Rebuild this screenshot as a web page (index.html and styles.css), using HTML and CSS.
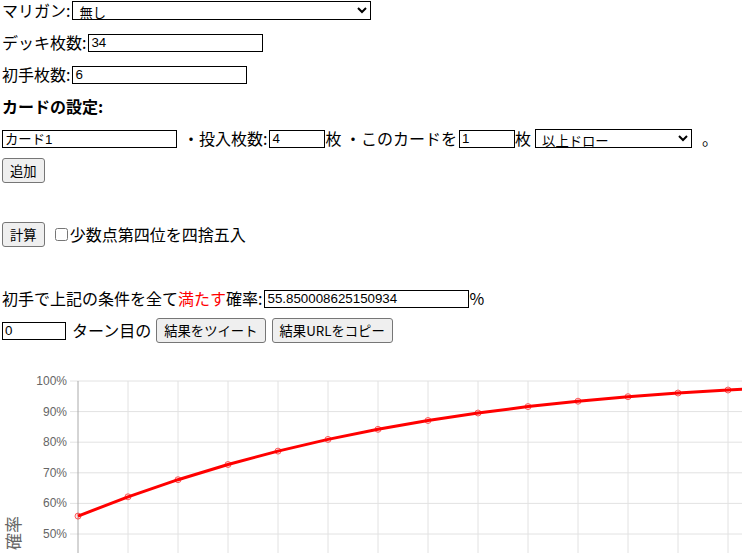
FILE: index.html
```html
<!DOCTYPE html>
<html>
	<head>
		<meta charset="utf-8">
		<title>初手確率計算</title>
		<link rel="stylesheet" href="styles.css">
	</head>
	<body>
		<div class="row">マリガン:<select class="sel sel-mulligan"><option>無し</option></select></div>
		<div class="row">デッキ枚数:<input class="txt w175" type="text" value="34"></div>
		<div class="row">初手枚数:<input class="txt w175" type="text" value="6"></div>
		<div class="row heading">カードの設定:</div>
		<div class="row"><input class="txt first w175" type="text" value="カード1"><span class="gap6">・投入枚数:</span><input class="txt w56" type="text" value="4"><span>枚 ・このカードを</span><input class="txt w56" type="text" value="1"><span>枚</span><select class="sel sel-draw"><option>以上ドロー</option></select><span class="gap10">。</span></div>
		<div class="row"><button class="btn">追加</button></div>
		<div class="row"></div>
		<div class="row"><button class="btn">計算</button><input class="chk" type="checkbox"><span>少数点第四位を四捨五入</span></div>
		<div class="row"></div>
		<div class="row">初手で上記の条件を全て<span class="red">満たす</span>確率:<input class="txt w205" type="text" value="55.850008625150934">%</div>
		<div class="row"><input class="txt first w64" type="text" value="0"><span class="turn">ターン目の</span><button class="btn">結果をツイート</button><button class="btn btn-next">結果URLをコピー</button></div>

		<div class="chart">
			<svg width="800" height="193" viewBox="0 0 800 193">
				<g class="grid">
					<line x1="70" y1="20" x2="800" y2="20"/>
					<line x1="70" y1="50.6" x2="800" y2="50.6"/>
					<line x1="70" y1="81.2" x2="800" y2="81.2"/>
					<line x1="70" y1="111.8" x2="800" y2="111.8"/>
					<line x1="70" y1="142.4" x2="800" y2="142.4"/>
					<line x1="70" y1="173" x2="800" y2="173"/>
					<line x1="128" y1="20" x2="128" y2="193"/>
					<line x1="178" y1="20" x2="178" y2="193"/>
					<line x1="228" y1="20" x2="228" y2="193"/>
					<line x1="278" y1="20" x2="278" y2="193"/>
					<line x1="328" y1="20" x2="328" y2="193"/>
					<line x1="378" y1="20" x2="378" y2="193"/>
					<line x1="428" y1="20" x2="428" y2="193"/>
					<line x1="478" y1="20" x2="478" y2="193"/>
					<line x1="528" y1="20" x2="528" y2="193"/>
					<line x1="578" y1="20" x2="578" y2="193"/>
					<line x1="628" y1="20" x2="628" y2="193"/>
					<line x1="678" y1="20" x2="678" y2="193"/>
					<line x1="728" y1="20" x2="728" y2="193"/>
				</g>
				<line class="axis" x1="78" y1="20" x2="78" y2="193"/>
				<g class="ticks">
					<text x="67" y="24">100%</text>
					<text x="67" y="54.6">90%</text>
					<text x="67" y="85.2">80%</text>
					<text x="67" y="115.8">70%</text>
					<text x="67" y="146.4">60%</text>
					<text x="67" y="177">50%</text>
				</g>
				<text class="axis-title" transform="translate(20,155) rotate(-90)">確率</text>
				<polyline class="line" points="78,155.1 128,135.8 178,118.7 228,103.5 278,90.1 328,78.4 378,68.3 428,59.5 478,52 528,45.6 578,40.2 628,35.7 678,32 728,29 778,26.6"/>
				<g class="dots">
					<circle cx="78" cy="155.1" r="3"/>
					<circle cx="128" cy="135.8" r="3"/>
					<circle cx="178" cy="118.7" r="3"/>
					<circle cx="228" cy="103.5" r="3"/>
					<circle cx="278" cy="90.1" r="3"/>
					<circle cx="328" cy="78.4" r="3"/>
					<circle cx="378" cy="68.3" r="3"/>
					<circle cx="428" cy="59.5" r="3"/>
					<circle cx="478" cy="52" r="3"/>
					<circle cx="528" cy="45.6" r="3"/>
					<circle cx="578" cy="40.2" r="3"/>
					<circle cx="628" cy="35.7" r="3"/>
					<circle cx="678" cy="32" r="3"/>
					<circle cx="728" cy="29" r="3"/>
					<circle cx="778" cy="26.6" r="3"/>
				</g>
			</svg>
		</div>
	</body>
</html>
```

FILE: styles.css
```css
html, body {
overflow: hidden;
}

body {
margin: 1px 0 0 2px;
font-family: "Noto Sans CJK JP", sans-serif;
font-size: 16px;
line-height: 19px;
color: #000;
background-color: white;
}

.row {
display: flex;
align-items: center;
height: 19px;
margin-bottom: 13px;
white-space: nowrap;
}

.heading {
font-weight: bold;
}

.red {
color: #f00;
}

.txt {
box-sizing: border-box;
height: 18px;
border: 1px solid #000;
border-radius: 0;
padding: 0 2px;
margin: 0 0 0 2px;
font-family: "Liberation Sans", "Noto Sans CJK JP", sans-serif;
font-size: 13.33px;
color: #000;
background: white;
}

.txt.first {
margin-left: 0;
}

.w175 { width: 175px; }
.w56 { width: 56px; }
.w205 { width: 205px; }
.w64 { width: 64px; }

.gap6 { margin-left: 6px; }
.gap10 { margin-left: 10px; }

.turn {
margin: 0 5px 0 6px;
}

.sel {
box-sizing: border-box;
height: 19px;
border: 1px solid #000;
border-radius: 0;
padding: 0 2px;
margin: 0 0 0 2px;
font-family: "Noto Sans CJK JP", sans-serif;
font-size: 13.33px;
color: #000;
background-color: white;
}

.sel-mulligan { width: 299px; }
.sel-draw { width: 157px; margin-left: 4px; }

.btn {
box-sizing: border-box;
height: 25px;
padding: 0 7px;
margin: 0;
font-family: "Noto Sans CJK JP", sans-serif;
font-size: 13.33px;
line-height: 23px;
color: #000;
background-color: #efefef;
border: 1px solid #767676;
border-radius: 3px;
}

.btn-next {
margin-left: 6px;
}

.chk {
width: 13px;
height: 13px;
margin: 0 2px 0 10px;
}

.chart {
margin: 21px 0 0 -2px;
height: 193px;
}

.chart svg {
display: block;
}

.grid line {
stroke: #e2e2e2;
stroke-width: 1;
}

.axis {
stroke: #aaa;
stroke-width: 1;
}

.ticks text {
font-family: "Liberation Sans", sans-serif;
font-size: 12px;
fill: #666;
text-anchor: end;
}

.axis-title {
font-family: "Noto Sans CJK JP", sans-serif;
font-size: 17px;
fill: #666;
text-anchor: end;
}

.line {
fill: none;
stroke: #f00;
stroke-width: 3;
stroke-linejoin: round;
}

.dots circle {
fill: rgba(255, 0, 0, 0.1);
stroke: rgba(255, 0, 0, 0.6);
stroke-width: 1;
}
```
